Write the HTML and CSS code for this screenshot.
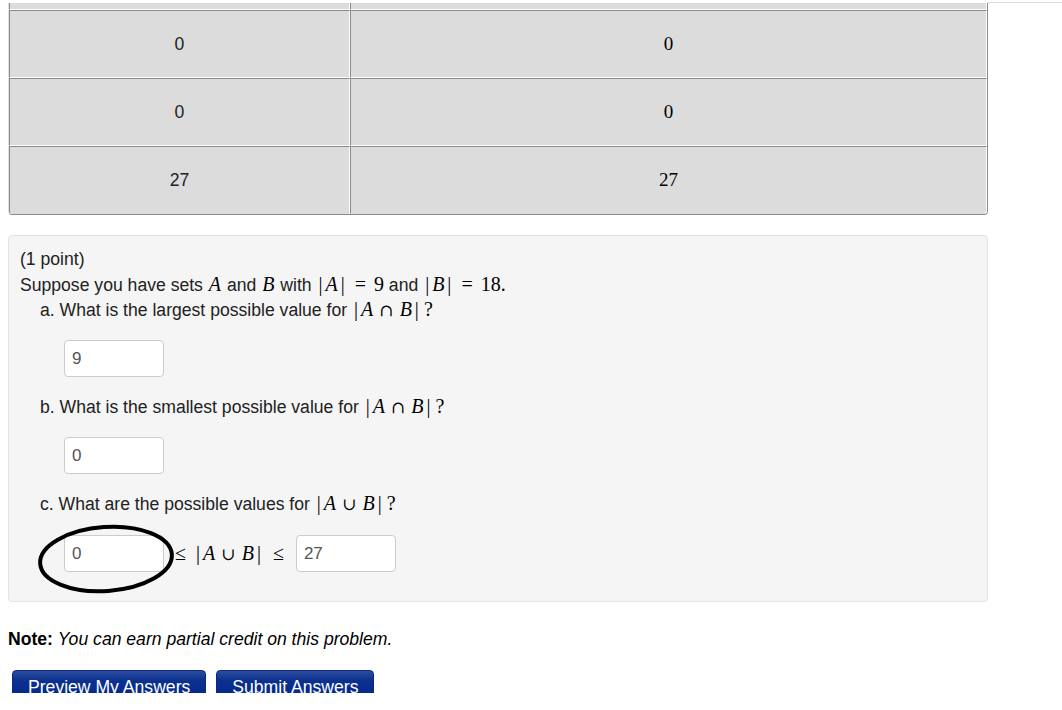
FILE: index.html
```html
<!DOCTYPE html>
<html>
<head>
<meta charset="utf-8">
<link rel="stylesheet" href="styles.css">
</head>
<body>
<div class="page">
  <div class="top-row">
    <table class="grid">
      <tr class="partial"><td class="c1"></td><td class="c2"></td></tr>
      <tr><td class="c1">0</td><td class="c2 m">0</td></tr>
      <tr><td class="c1">0</td><td class="c2 m">0</td></tr>
      <tr><td class="c1">27</td><td class="c2 m">27</td></tr>
    </table>
    <div class="rule"></div>
  </div>

  <div class="problem">
    <div class="line">(1 point)</div>
    <div class="line">Suppose you have sets <span class="m"><i>A</i></span> and <span class="m"><i>B</i></span> with <span class="m"><span class="bar">|</span><i>A</i><span class="bar">|</span><span class="rel">=</span>9</span> and <span class="m"><span class="bar">|</span><i>B</i><span class="bar">|</span><span class="rel">=</span>18.</span></div>
    <div class="item">
      <div class="line">a. What is the largest possible value for <span class="m"><span class="bar">|</span><i>A</i><span class="bin">∩</span><i>B</i><span class="bar">|</span></span><span class="m q">?</span></div>
      <div class="answer"><span class="field">9</span></div>
    </div>
    <div class="item">
      <div class="line">b. What is the smallest possible value for <span class="m"><span class="bar">|</span><i>A</i><span class="bin">∩</span><i>B</i><span class="bar">|</span></span><span class="m q">?</span></div>
      <div class="answer"><span class="field">0</span></div>
    </div>
    <div class="item">
      <div class="line">c. What are the possible values for <span class="m"><span class="bar">|</span><i>A</i><span class="bin">∪</span><i>B</i><span class="bar">|</span></span><span class="m q">?</span></div>
      <div class="answer range">
        <span class="field">0</span>
        <span class="m ineq">≤<span class="sp"></span><span class="bar">|</span><i>A</i><span class="bin">∪</span><i>B</i><span class="bar">|</span><span class="sp2"></span>≤</span>
        <span class="field">27</span>
        <svg class="circle" width="146" height="80" viewBox="0 0 146 80"><ellipse cx="72" cy="40" rx="66" ry="32" transform="rotate(-4 72 40)" fill="none" stroke="#000" stroke-width="4"/></svg>
      </div>
    </div>
  </div>

  <div class="note"><b>Note:</b> <i>You can earn partial credit on this problem.</i></div>

  <div class="buttons">
    <span class="btn">Preview My Answers</span>
    <span class="btn">Submit Answers</span>
  </div>
</div>
</body>
</html>
```

FILE: styles.css
```css
html, body {
  margin: 0;
  padding: 0;
  background: #fff;
}
.page {
  height: 693px;
  overflow: hidden;
  font-family: "Liberation Sans", Arial, sans-serif;
  font-size: 17.6px;
  color: #222;
}
.top-row {
  display: flex;
  align-items: flex-start;
  padding-left: 8px;
}
.rule {
  flex: 1;
  margin-top: 2px;
  border-top: 1px solid #dcdcdc;
}
.grid {
  width: 980px;
  margin-top: 3px;
  border-collapse: separate;
  border-spacing: 0;
  border-left: 1px solid #e2e2e2;
  border-right: 1px solid #8a8a8a;
  border-bottom: 1px solid #8a8a8a;
  border-radius: 0 0 4px 4px;
  table-layout: fixed;
}
.grid td {
  background: #dcdcdc;
  border-top: 1px solid #8a8a8a;
  border-left: 1px solid #8a8a8a;
  border-right: 1px solid #fff;
  border-bottom: 1px solid #fff;
  height: 66px;
  padding: 0;
  text-align: center;
  vertical-align: middle;
}
.grid tr:last-child td {
  border-bottom: 1px solid #dcdcdc;
}
.grid tr:last-child td.c1 {
  border-bottom-left-radius: 3px;
}
.grid tr:last-child td.c2 {
  border-bottom-right-radius: 3px;
}
.grid td.c1 {
  width: 341px;
  box-sizing: border-box;
}
.grid .partial td {
  height: 6px;
  border-top: none;
}
.m {
  font-family: "Liberation Serif", "Times New Roman", serif;
  font-size: 20px;
  color: #000;
}
.grid td.m {
  font-size: 19px;
}
.m i {
  font-style: italic;
  padding: 0 1px;
}
.bar {
  padding: 0 2px;
}
.rel {
  margin: 0 0.4em;
}
.bin {
  font-family: "DejaVu Serif", serif;
  font-size: 17px;
  margin: 0 0.3em;
}
.q {
  margin-left: 0.15em;
}
.sp {
  display: inline-block;
  width: 8px;
}
.sp2 {
  display: inline-block;
  width: 10px;
}
.problem {
  margin: 20px 0 0 8px;
  width: 980px;
  box-sizing: border-box;
  background: #f5f5f5;
  border: 1px solid #e3e3e3;
  border-radius: 4px;
  padding: 11px 11px 11px 11px;
}
.line {
  line-height: 25px;
  height: 25px;
}
.item {
  padding-left: 20px;
}
.answer {
  position: relative;
  display: flex;
  align-items: center;
  margin: 18px 0 17px 24px;
  height: 37px;
}
.item:last-child .answer {
  margin: 19px 0 18px 24px;
}
.field {
  display: inline-block;
  box-sizing: border-box;
  width: 100px;
  height: 37px;
  line-height: 35px;
  padding: 0 7px;
  background: #fff;
  border: 1px solid #ccc;
  border-radius: 4px;
  font-size: 17px;
  color: #555;
}
.ineq {
  margin: 0 12px 0 11px;
}
.circle {
  position: absolute;
  left: -30px;
  top: -16px;
}
.note {
  margin: 25px 0 0 8px;
  line-height: 25px;
  color: #000;
}
.buttons {
  display: flex;
  gap: 10px;
  margin: 18px 0 0 12px;
}
.btn {
  display: inline-block;
  box-sizing: border-box;
  height: 38px;
  padding: 4px 15px 0 15px;
  line-height: 25px;
  color: #fff;
  border-radius: 4px;
  background: linear-gradient(to bottom, #2c4f9e 0%, #0c3190 25%, #00228a 100%);
  border: 1px solid #0a2a80;
}
```
